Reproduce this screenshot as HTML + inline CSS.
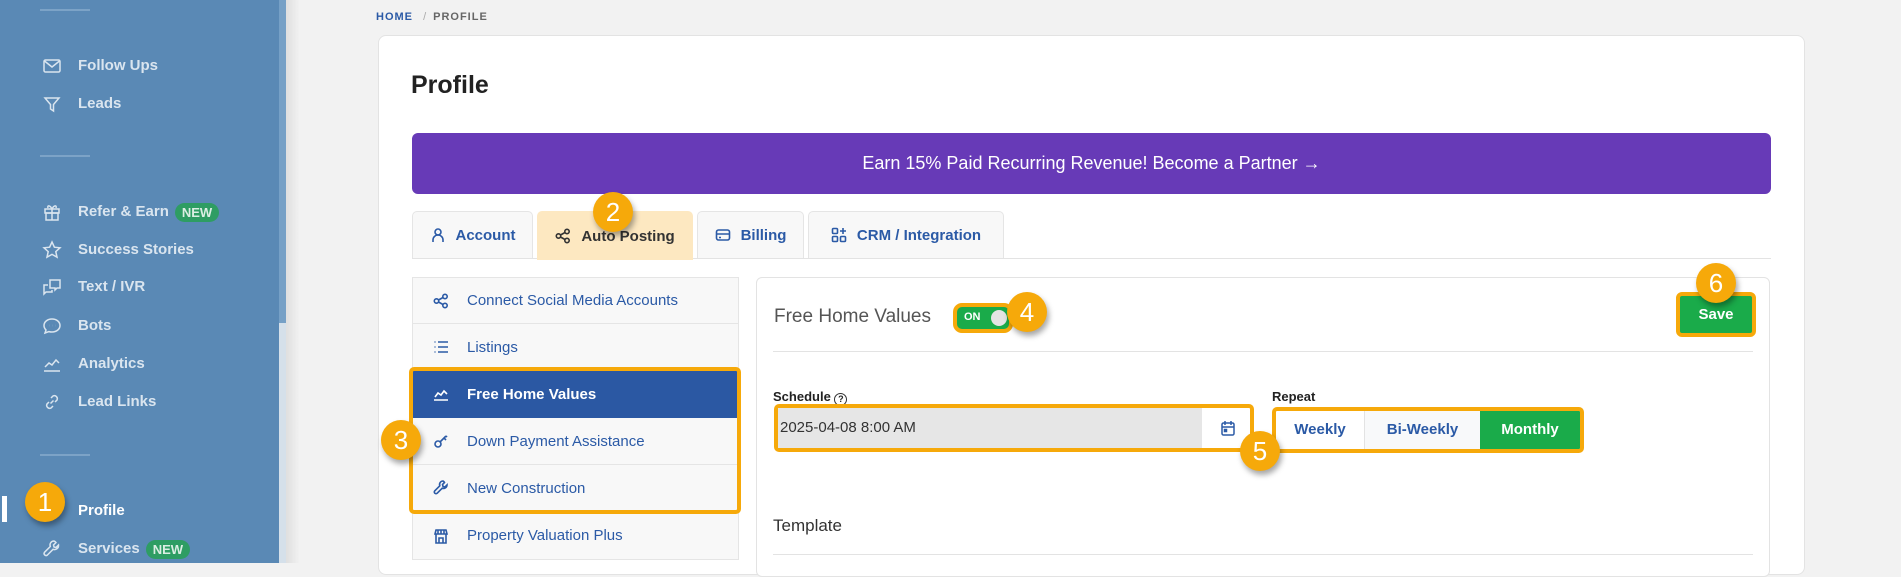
<!DOCTYPE html>
<html><head><meta charset="utf-8"><style>
*{box-sizing:border-box;margin:0;padding:0}
body{width:1901px;height:563px;overflow:hidden;background:#f2f2f2;font-family:"Liberation Sans",sans-serif;position:relative}
.a{position:absolute}
.sb{left:0;top:0;width:279px;height:563px;background:#5a89b5}
.sbt{left:279px;top:0;width:7px;height:563px;background:#d5e0ea}
.sbth{left:279px;top:0;width:7px;height:323px;background:#76a0c6}
.shadow{left:286px;top:0;width:14px;height:563px;background:linear-gradient(90deg,rgba(0,0,0,.08),rgba(0,0,0,0))}
.div{left:40px;width:50px;height:2px;background:#7ca3c7}
.si{left:42px;font-size:15px;font-weight:bold;color:#dae5ef;height:20px;line-height:20px;display:flex;align-items:center}
.si svg{width:20px;height:20px;margin-right:16px;stroke:#dae5ef;fill:none;stroke-width:1.5}
.new{background:#2e9d63;color:#dbeee3;border-radius:10px;font-size:13px;padding:1px 7px;margin-left:6px;height:19px;line-height:17px}
.badge{width:40px;height:40px;border-radius:50%;background:#f6a90a;color:#fff;font-size:26px;text-align:center;line-height:40px;box-shadow:2px 4px 6px rgba(0,0,0,.35);z-index:10;transform:translate(-20px,-20px)}
.card{left:378px;top:35px;width:1427px;height:540px;background:#fff;border:1px solid #e3e3e3;border-radius:8px}
.tab{top:211px;height:47px;background:#f8f8f8;border:1px solid #e5e5e5;border-bottom:none;border-radius:5px 5px 0 0;font-size:15px;font-weight:bold;color:#2b5aa6;display:flex;align-items:center;justify-content:center}
.tab svg{width:16px;height:16px;margin-right:10px;stroke:currentColor;fill:none;stroke-width:1.6}
.mi{left:412px;width:327px;height:47px;background:#f8f8f8;border:1px solid #e5e5e5;border-top:none;font-size:15px;color:#2b5aa6;display:flex;align-items:center;padding-left:20px}
.mi svg{width:16px;height:16px;margin-right:18px;stroke:currentColor;fill:none;stroke-width:1.6}
.ob{border:4px solid #f6a90a;border-radius:5px}
</style></head><body>
<div class="a sb"></div><div class="a sbt"></div><div class="a sbth"></div><div class="a shadow"></div>
<div class="a div" style="top:9px"></div>
<div class="a div" style="top:155px"></div>
<div class="a div" style="top:454px"></div>
<div class="a si" style="top:56px"><svg viewBox="0 0 20 20"><rect x="2" y="4" width="16" height="12" rx="1.5"/><path d="M2.5 5l7.5 6 7.5-6"/></svg>Follow Ups</div>
<div class="a si" style="top:94px"><svg viewBox="0 0 20 20"><path d="M3 4h14l-5.5 6.5V17l-3-2v-4.5z"/></svg>Leads</div>
<div class="a si" style="top:202px"><svg viewBox="0 0 20 20"><rect x="3" y="7" width="14" height="4"/><rect x="4" y="11" width="12" height="7"/><path d="M10 7v11M10 7C8 3 5 3 6 6M10 7c2-4 5-4 4-1"/></svg>Refer &amp; Earn<span class="new">NEW</span></div>
<div class="a si" style="top:240px"><svg viewBox="0 0 20 20"><path d="M10 2l2.4 5.2 5.6.6-4.2 3.8 1.2 5.6L10 14.4 5 17.2l1.2-5.6L2 7.8l5.6-.6z"/></svg>Success Stories</div>
<div class="a si" style="top:277px"><svg viewBox="0 0 20 20"><path d="M8 3h10v8h-3l-2 2V11H8zM6 8H2v9l2-2h6v-2"/></svg>Text / IVR</div>
<div class="a si" style="top:316px"><svg viewBox="0 0 20 20"><path d="M10 3c4.5 0 8 2.8 8 6.5S14.5 16 10 16c-1 0-2-.1-3-.4L3 17l1-3C2.8 12.8 2 11.2 2 9.5 2 5.8 5.5 3 10 3z"/><path d="M7 9.5h.1M10 9.5h.1M13 9.5h.1" stroke-width="2"/></svg>Bots</div>
<div class="a si" style="top:354px"><svg viewBox="0 0 20 20"><path d="M2 17h16M3 13l4-4 3 2 4-5 3 3"/></svg>Analytics</div>
<div class="a si" style="top:392px"><svg viewBox="0 0 20 20"><path d="M8.5 11.5l3-3M9 6l2-2a3 3 0 014 4l-2 2M11 14l-2 2a3 3 0 01-4-4l2-2"/></svg>Lead Links</div>
<div class="a" style="left:2px;top:496px;width:5px;height:26px;background:#fff"></div>
<div class="a si" style="top:501px;left:78px;color:#fff">Profile</div>
<div class="a si" style="top:539px"><svg viewBox="0 0 20 20"><path d="M12 2a4 4 0 00-3.7 5.5L2.5 13.3a2 2 0 002.8 2.8l5.8-5.8A4 4 0 0016.5 6l-2.5 2.5-2-.5-.5-2L14 3.5A4 4 0 0012 2z"/></svg>Services<span class="new">NEW</span></div>
<div class="a badge" style="left:45px;top:502px">1</div>

<div class="a" style="left:376px;top:11px;font-size:11px;font-weight:bold;letter-spacing:1px;color:#2b5aa6">HOME <span style="color:#aaa;font-weight:normal;margin:0 6px">/</span><span style="color:#666">PROFILE</span></div>
<div class="a card"></div>
<div class="a" style="left:411px;top:71px;font-size:25px;font-weight:bold;color:#222">Profile</div>
<div class="a" style="left:412px;top:133px;width:1359px;height:61px;background:#673ab7;border-radius:6px;color:#fff;font-size:18px;text-align:center;line-height:61px">Earn 15% Paid Recurring Revenue! Become a Partner →</div>

<div class="a" style="left:412px;top:258px;width:1359px;height:1px;background:#e3e3e3"></div>
<div class="a tab" style="left:412px;width:121px"><svg viewBox="0 0 16 16"><circle cx="8" cy="5" r="3"/><path d="M3 15v-2a5 5 0 0110 0v2"/></svg>Account</div>
<div class="a tab" style="left:537px;width:156px;height:49px;background:#fde8c1;border-color:#fde8c1;color:#333"><svg viewBox="0 0 16 16"><circle cx="3.5" cy="8" r="2.2"/><circle cx="12" cy="3.5" r="2.2"/><circle cx="12" cy="12.5" r="2.2"/><path d="M5.5 7l4.5-2.5M5.5 9l4.5 2.5"/></svg>Auto Posting</div>
<div class="a tab" style="left:697px;width:107px"><svg viewBox="0 0 16 16"><rect x="1.5" y="3" width="13" height="10" rx="2"/><path d="M1.5 7h13M4 10.5h2"/></svg>Billing</div>
<div class="a tab" style="left:808px;width:196px"><svg viewBox="0 0 16 16"><rect x="1.5" y="1.5" width="5" height="5" rx="1"/><rect x="1.5" y="9.5" width="5" height="5" rx="1"/><rect x="9.5" y="9.5" width="5" height="5" rx="1"/><path d="M12 1v6M9 4h6"/></svg>CRM / Integration</div>
<div class="a badge" style="left:613px;top:212px">2</div>

<div class="a mi" style="top:277px;border-top:1px solid #e5e5e5;height:47px"><svg viewBox="0 0 16 16"><circle cx="3.5" cy="8" r="2.2"/><circle cx="12" cy="3.5" r="2.2"/><circle cx="12" cy="12.5" r="2.2"/><path d="M5.5 7l4.5-2.5M5.5 9l4.5 2.5"/></svg>Connect Social Media Accounts</div>
<div class="a mi" style="top:324px"><svg viewBox="0 0 16 16"><path d="M5 3h10M5 8h10M5 13h10M1.5 3h1M1.5 8h1M1.5 13h1"/></svg>Listings</div>
<div class="a mi" style="top:371px;background:#2b58a3;color:#fff;font-weight:bold;border-color:#2b58a3"><svg viewBox="0 0 16 16"><path d="M1 14h14M2 11l3-4 3 2 3-4 3 3"/></svg>Free Home Values</div>
<div class="a mi" style="top:418px"><svg viewBox="0 0 16 16"><circle cx="5" cy="11" r="3"/><path d="M7 9l6-6M11 5l2 2M13 3l1 1"/></svg>Down Payment Assistance</div>
<div class="a mi" style="top:465px"><svg viewBox="0 0 16 16"><path d="M10 1a3.5 3.5 0 00-3.2 4.8L1.8 10.8a1.6 1.6 0 002.4 2.4l5-5A3.5 3.5 0 0014 5l-2 2-2-.5-.5-2 2-2A3.5 3.5 0 0010 1z"/></svg>New Construction</div>
<div class="a mi" style="top:512px;height:48px"><svg viewBox="0 0 16 16"><path d="M2 6h12M3 2h10l1 4H2zM3 6v9h10V6M6 15v-5h4v5M5 2v4M11 2v4M8 2v4"/></svg>Property Valuation Plus</div>
<div class="a ob" style="left:409px;top:367px;width:332px;height:147px"></div>
<div class="a badge" style="left:401px;top:440px">3</div>

<div class="a" style="left:756px;top:277px;width:1014px;height:300px;border:1px solid #e3e3e3;border-radius:6px;background:#fff"></div>
<div class="a" style="left:774px;top:302px;font-size:19px;color:#555;line-height:30px">Free Home Values</div>
<div class="a ob" style="left:953px;top:303px;width:60px;height:30px;border-radius:9px;background:#1aab4a;border-width:4px"></div>
<div class="a" style="left:964px;top:311px;font-size:11px;font-weight:bold;color:#fff">ON</div>
<div class="a" style="left:991px;top:310px;width:16px;height:16px;border-radius:50%;background:#e4e4e4"></div>
<div class="a badge" style="left:1027px;top:312px">4</div>
<div class="a" style="left:1676px;top:292px;width:80px;height:45px;background:#1aab4a;border:4px solid #f6a90a;border-radius:6px;color:#fff;font-weight:bold;font-size:15px;text-align:center;line-height:37px">Save</div>
<div class="a badge" style="left:1716px;top:283px">6</div>
<div class="a" style="left:773px;top:351px;width:980px;height:1px;background:#e3e3e3"></div>
<div class="a" style="left:773px;top:389px;font-size:13px;font-weight:bold;color:#222">Schedule <span style="display:inline-block;width:13px;height:13px;border:1.3px solid #333;border-radius:50%;font-size:9px;text-align:center;line-height:11px;vertical-align:-1px">?</span></div>
<div class="a ob" style="left:774px;top:404px;width:480px;height:48px;background:#fff"></div>
<div class="a" style="left:778px;top:408px;width:424px;height:40px;background:#e6e6e6;font-size:15px;color:#333;line-height:40px;padding-left:2px">2025-04-08 8:00 AM</div>
<svg class="a" style="left:1221px;top:420px" width="14" height="16" viewBox="0 0 14 16" fill="none" stroke="#2b5aa6" stroke-width="1.5"><rect x="1" y="3" width="12" height="12" rx="1.5"/><path d="M1 7h12M4 1v4M10 1v4"/><rect x="3.5" y="9.5" width="2" height="2" fill="#2b5aa6"/></svg>
<div class="a" style="left:1272px;top:389px;font-size:13px;font-weight:bold;color:#222">Repeat</div>
<div class="a ob" style="left:1272px;top:407px;width:312px;height:46px;background:#fff;display:flex;overflow:hidden">
<div style="width:89px;font-size:15px;font-weight:bold;color:#2b5aa6;text-align:center;line-height:38px;border-right:1px solid #e3e3e3">Weekly</div>
<div style="width:115px;font-size:15px;font-weight:bold;color:#2b5aa6;text-align:center;line-height:38px;background:#f8f9fa">Bi-Weekly</div>
<div style="flex:1;font-size:15px;font-weight:bold;color:#fff;text-align:center;line-height:38px;background:#1aab4a">Monthly</div></div>
<div class="a badge" style="left:1260px;top:451px">5</div>
<div class="a" style="left:773px;top:516px;font-size:17px;color:#333">Template</div>
<div class="a" style="left:773px;top:554px;width:980px;height:1px;background:#e3e3e3"></div>
</body></html>
